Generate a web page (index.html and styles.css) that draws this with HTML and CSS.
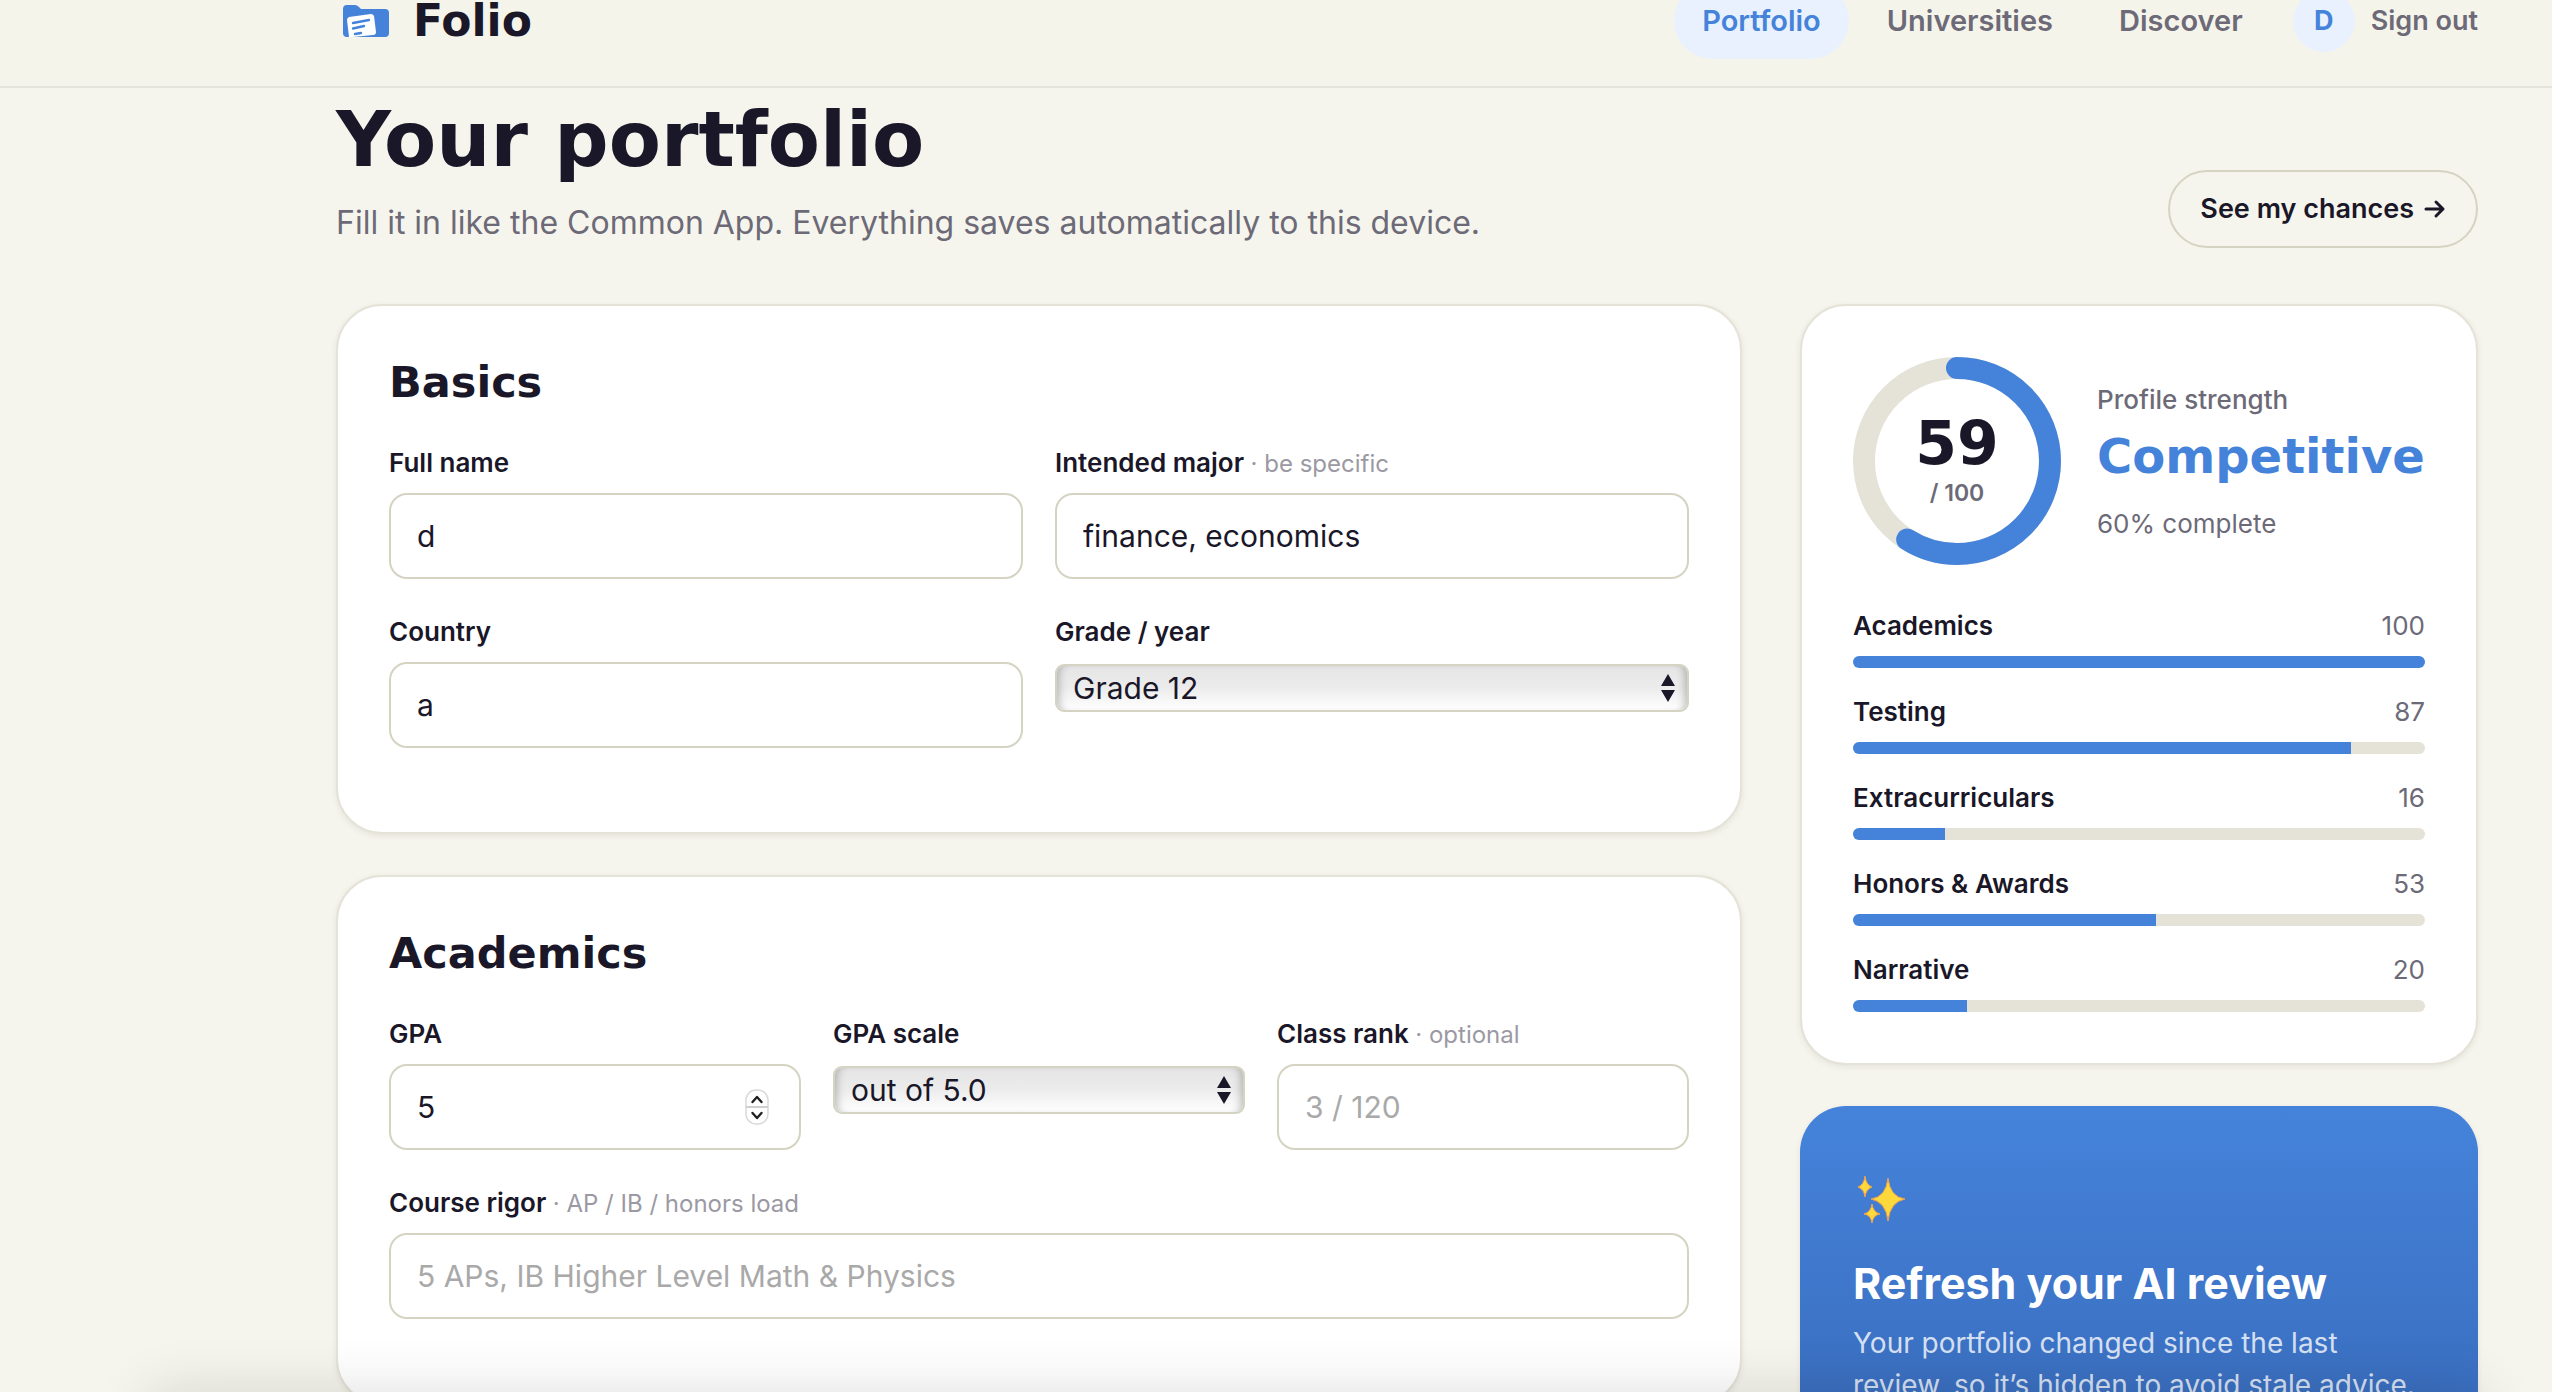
FILE: index.html
```html
<!DOCTYPE html>
<html lang="en">
<head>
<meta charset="utf-8">
<meta name="viewport" content="width=device-width, initial-scale=1">
<title>Folio – Your portfolio</title>
<link rel="stylesheet" href="styles.css">
</head>
<body>
<header class="topbar">
  <a class="brand" href="#">
    <svg class="brand-icon" viewBox="0 0 46 34" aria-hidden="true">
      <path d="M0 5Q0 1 4 1h8q2 0 4 2l2 2h24q4 0 4 4v20q0 4-4 4H4q-4 0-4-4z" fill="#4583db"/>
      <path d="M6 13l22-3q2 0 3 2l2 16q0 3-3 3l-20 2H6L4 16q0-2 2-3z" fill="#fff"/>
      <path d="M10 19l16-3M10 24.500l11-2.500M12 30l6-1" stroke="#4583db" stroke-width="2.400" stroke-linecap="round"/>
    </svg>
    <span>Folio</span>
  </a>
  <nav class="nav">
    <a class="nav-link nav-link-active" href="#">Portfolio</a>
    <a class="nav-link" href="#">Universities</a>
    <a class="nav-link" href="#">Discover</a>
    <span class="avatar">D</span>
    <button class="signout" type="button">Sign out</button>
  </nav>
</header>

<main class="page">
  <div class="page-head">
    <div>
      <h1 class="page-title">Your portfolio</h1>
      <p class="page-sub">Fill it in like the Common App. Everything saves automatically to this device.</p>
    </div>
    <button class="chances" type="button">See my chances
      <svg class="arrow" viewBox="0 0 22 20" aria-hidden="true"><path d="M2 10h17M12 3l7 7-7 7"/></svg>
    </button>
  </div>

  <div class="layout">
    <form class="stack">
      <section class="card">
        <h2 class="card-title">Basics</h2>
        <div class="fields fields-two">
          <div class="field">
            <label class="label" for="name">Full name</label>
            <input class="input" id="name" type="text" value="d">
          </div>
          <div class="field">
            <label class="label" for="major">Intended major <span class="hint">· be specific</span></label>
            <input class="input" id="major" type="text" value="finance, economics">
          </div>
          <div class="field">
            <label class="label" for="country">Country</label>
            <input class="input" id="country" type="text" value="a">
          </div>
          <div class="field">
            <label class="label" for="grade">Grade / year</label>
            <div class="select-wrap">
              <select class="select" id="grade"><option>Grade 12</option></select>
              <svg class="select-arrows" viewBox="0 0 14 28" aria-hidden="true"><path d="M7 0l7 12H0zM7 28l7-12H0z"/></svg>
            </div>
          </div>
        </div>
      </section>

      <section class="card">
        <h2 class="card-title">Academics</h2>
        <div class="fields fields-three">
          <div class="field">
            <label class="label" for="gpa">GPA</label>
            <div class="number-wrap">
              <input class="input" id="gpa" type="number" value="5">
              <svg class="stepper" viewBox="0 0 24 36" aria-hidden="true">
                <rect x="1" y="1" width="22" height="34" rx="10" fill="#fff" stroke="#d9d9d9" stroke-width="1.500"/>
                <path d="M1 18h22" stroke="#cfcfcf" stroke-width="2"/>
                <path d="M7.500 13l4.500-5 4.500 5M7.500 24l4.500 5 4.500-5" fill="none" stroke="#222" stroke-width="2.400" stroke-linecap="round" stroke-linejoin="round"/>
              </svg>
            </div>
          </div>
          <div class="field">
            <label class="label" for="scale">GPA scale</label>
            <div class="select-wrap">
              <select class="select" id="scale"><option>out of 5.0</option></select>
              <svg class="select-arrows" viewBox="0 0 14 28" aria-hidden="true"><path d="M7 0l7 12H0zM7 28l7-12H0z"/></svg>
            </div>
          </div>
          <div class="field">
            <label class="label" for="rank">Class rank <span class="hint">· optional</span></label>
            <input class="input" id="rank" type="text" placeholder="3 / 120">
          </div>
          <div class="field field-wide">
            <label class="label" for="rigor">Course rigor <span class="hint">· AP / IB / honors load</span></label>
            <input class="input" id="rigor" type="text" placeholder="5 APs, IB Higher Level Math &amp; Physics">
          </div>
        </div>
      </section>
    </form>

    <aside class="stack">
      <section class="card">
        <div class="strength">
          <div class="ring">
            <svg class="ring-svg" viewBox="0 0 208 208" aria-hidden="true">
              <circle class="ring-track" cx="104" cy="104" r="93"/>
              <circle class="ring-fill" cx="104" cy="104" r="93" pathLength="100" stroke-dasharray="59 100" transform="rotate(-90 104 104)"/>
            </svg>
            <div class="ring-text">
              <span class="score">59</span>
              <span class="score-max">/ 100</span>
            </div>
          </div>
          <div class="strength-text">
            <span class="strength-label">Profile strength</span>
            <span class="strength-value">Competitive</span>
            <span class="strength-done">60% complete</span>
          </div>
        </div>
        <ul class="meters">
          <li><div class="meter-head"><span class="meter-name">Academics</span><span>100</span></div><div class="bar"><div class="bar-fill" style="width:100%"></div></div></li>
          <li><div class="meter-head"><span class="meter-name">Testing</span><span>87</span></div><div class="bar"><div class="bar-fill" style="width:87%"></div></div></li>
          <li><div class="meter-head"><span class="meter-name">Extracurriculars</span><span>16</span></div><div class="bar"><div class="bar-fill" style="width:16%"></div></div></li>
          <li><div class="meter-head"><span class="meter-name">Honors &amp; Awards</span><span>53</span></div><div class="bar"><div class="bar-fill" style="width:53%"></div></div></li>
          <li><div class="meter-head"><span class="meter-name">Narrative</span><span>20</span></div><div class="bar"><div class="bar-fill" style="width:20%"></div></div></li>
        </ul>
      </section>

      <section class="card card-blue">
        <svg class="sparkles" viewBox="0 0 48 48" aria-hidden="true">
          <path d="M30 2q2 19 17 21-15 3-17 22-2-19-17-22Q28 21 30 2zM7 0q1 9 7 11-6 2-7 10-1-8-7-10Q6 9 7 0zM14 28q1 8 8 10-7 1-8 9-1-8-8-9 7-2 8-10z" fill="#ffd93b" stroke="#f2a24b" stroke-width="1"/>
        </svg>
        <h2 class="review-title">Refresh your AI review</h2>
        <p class="review-text">Your portfolio changed since the last review, so it’s hidden to avoid stale advice.</p>
      </section>
    </aside>
  </div>
</main>
</body>
</html>
```

FILE: styles.css
```css
:root {
  --ink: #1a1729;
  --muted: #6d6a78;
  --faint: #9b99a3;
  --blue: #4583db;
  --blue-soft: #e8f1fd;
  --line: #e5e3d8;
  --line-strong: #d5d3c1;
  --display: "DejaVu Sans", sans-serif;
}

* {
  box-sizing: border-box;
}

body {
  margin: 0;
  background: #f6f5ed;
  color: var(--ink);
  font: 400 26px/40px Inter, sans-serif;
}

/* soft shade along the bottom edge of the window */
body::after {
  content: "";
  position: fixed;
  left: 170px;
  right: 90px;
  bottom: -34px;
  height: 10px;
  box-shadow: 0 0 60px 20px rgba(0, 0, 0, 0.16);
  pointer-events: none;
}

h1, h2, p, ul {
  margin: 0;
  padding: 0;
}

button {
  font: inherit;
  cursor: pointer;
}

/* header, partly scrolled out of view */
.topbar {
  display: flex;
  align-items: center;
  justify-content: space-between;
  height: 132px;
  margin-top: -44px;
  padding: 0 74px 0 343px;
  background: #f5f4eb;
  border-bottom: 2px solid #e4e3dc;
}

.brand {
  display: flex;
  align-items: center;
  gap: 24px;
  color: var(--ink);
  font: 700 44px/60px var(--display);
  text-decoration: none;
}

.brand-icon {
  width: 46px;
  height: 34px;
}

.nav {
  display: flex;
  align-items: center;
  gap: 10px;
}

.nav-link {
  padding: 18px 28px;
  border-radius: 38px;
  color: var(--muted);
  font-size: 29px;
  font-weight: 600;
  text-decoration: none;
}

.nav-link-active {
  background: var(--blue-soft);
  color: var(--blue);
}

.avatar {
  width: 62px;
  margin-left: 12px;
  border-radius: 50%;
  background: var(--blue-soft);
  color: var(--blue);
  font-size: 27px;
  font-weight: 700;
  line-height: 62px;
  text-align: center;
}

.signout {
  margin-left: 6px;
  padding: 0;
  border: 0;
  background: none;
  color: var(--muted);
  font-size: 27px;
  font-weight: 600;
}

.page {
  padding: 10px 74px 0 336px;
}

.page-head {
  display: flex;
  align-items: flex-end;
  justify-content: space-between;
  margin-bottom: 56px;
}

.page-title {
  font: 700 76px/84px var(--display);
}

.page-sub {
  margin-top: 16px;
  color: var(--muted);
  font-size: 32px;
  line-height: 50px;
}

.chances {
  display: flex;
  align-items: center;
  gap: 10px;
  height: 78px;
  padding: 0 30px;
  border: 2px solid var(--line-strong);
  border-radius: 39px;
  background: none;
  color: var(--ink);
  font-size: 27px;
  font-weight: 600;
}

.arrow {
  width: 22px;
  height: 20px;
  fill: none;
  stroke: currentColor;
  stroke-width: 3;
  stroke-linecap: round;
  stroke-linejoin: round;
}

.layout {
  display: grid;
  grid-template-columns: minmax(0, 1fr) 678px;
  gap: 58px;
  align-items: start;
}

.stack {
  display: grid;
  gap: 41px;
}

.card {
  padding: 51px;
  border: 2px solid var(--line);
  border-radius: 46px;
  background: #fff;
  box-shadow: 0 2px 6px rgba(26, 23, 41, 0.08);
}

.card-title {
  margin-bottom: 36px;
  font: 700 43px/50px var(--display);
}

.fields {
  display: grid;
  column-gap: 32px;
}

.fields-two {
  grid-template-columns: repeat(2, minmax(0, 1fr));
}

.fields-three {
  grid-template-columns: repeat(3, minmax(0, 1fr));
}

.field {
  margin-bottom: 33px;
}

.field-wide {
  grid-column: 1 / -1;
}

.label {
  display: block;
  margin-bottom: 10px;
  font-weight: 600;
}

.hint {
  color: var(--faint);
  font-size: 24px;
  font-weight: 400;
  line-height: 24px;
}

.input {
  display: block;
  width: 100%;
  height: 86px;
  padding: 0 26px;
  border: 2px solid var(--line-strong);
  border-radius: 18px;
  background: #fff;
  color: var(--ink);
  font: 400 30px/40px Inter, sans-serif;
  appearance: textfield;
}

.input::placeholder {
  color: #a9a9a9;
}

.input::-webkit-inner-spin-button {
  appearance: none;
}

.number-wrap,
.select-wrap {
  position: relative;
}

.stepper {
  position: absolute;
  top: 25px;
  right: 32px;
  width: 24px;
  height: 36px;
}

.select-wrap {
  padding-top: 2px;
}

.select {
  display: block;
  width: 100%;
  height: 48px;
  padding: 0 16px;
  border: 2px solid var(--line-strong);
  border-radius: 9px;
  background: linear-gradient(#e5e5e5, #ececec 50%, #fff);
  box-shadow: inset 8px 0 8px -6px rgba(0, 0, 0, 0.25), inset -8px 0 8px -6px rgba(0, 0, 0, 0.25);
  color: var(--ink);
  font: 400 30px/40px Inter, sans-serif;
  appearance: none;
}

.select-arrows {
  position: absolute;
  top: 12px;
  right: 14px;
  width: 14px;
  height: 28px;
  fill: var(--ink);
  pointer-events: none;
}

.strength {
  display: flex;
  align-items: center;
  gap: 36px;
  margin-bottom: 41px;
}

.ring {
  position: relative;
  flex: none;
  width: 208px;
  height: 208px;
}

.ring-svg {
  display: block;
}

.ring-track,
.ring-fill {
  fill: none;
  stroke: var(--line);
  stroke-width: 22;
}

.ring-fill {
  stroke: var(--blue);
  stroke-linecap: round;
}

.ring-text {
  position: absolute;
  inset: 0;
  display: flex;
  flex-direction: column;
  align-items: center;
  justify-content: center;
}

.score {
  font: 700 60px/64px var(--display);
}

.score-max {
  color: var(--muted);
  font-size: 23px;
  font-weight: 600;
  line-height: 36px;
}

.strength-text {
  display: flex;
  flex-direction: column;
  padding-top: 2px;
}

.strength-label {
  color: var(--muted);
  font-weight: 500;
}

.strength-value {
  margin-bottom: 12px;
  color: var(--blue);
  font: 700 48px/72px var(--display);
}

.strength-done {
  color: var(--muted);
}

.meters {
  display: grid;
  gap: 24px;
  list-style: none;
}

.meter-head {
  display: flex;
  justify-content: space-between;
  margin-bottom: 10px;
  color: var(--muted);
}

.meter-name {
  color: var(--ink);
  font-weight: 600;
}

.bar {
  height: 12px;
  overflow: hidden;
  border-radius: 6px;
  background: var(--line);
}

.bar-fill {
  height: 100%;
  background: var(--blue);
}

.card-blue {
  padding-top: 68px;
  border-color: transparent;
  background: linear-gradient(#4583db, #386bbb) border-box;
  color: #fff;
}

.sparkles {
  display: block;
  width: 48px;
  height: 48px;
  margin: 0 0 32px 5px;
}

.review-title {
  margin-bottom: 12px;
  font-size: 43px;
  font-weight: 700;
  line-height: 54px;
}

.review-text {
  color: rgba(255, 255, 255, 0.8);
  font-size: 28px;
  line-height: 42px;
}
```
